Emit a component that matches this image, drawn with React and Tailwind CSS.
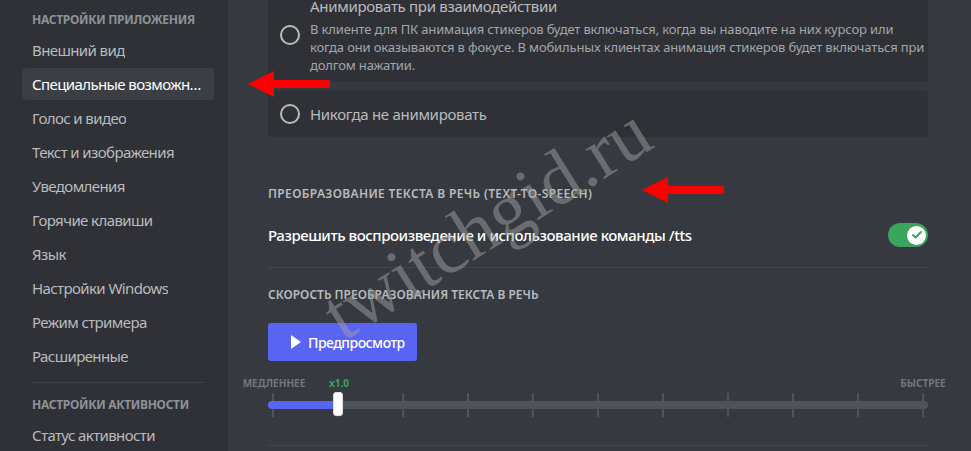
import { Check } from "lucide-react";

const appItems = [
  "Внешний вид",
  "Специальные возможности",
  "Голос и видео",
  "Текст и изображения",
  "Уведомления",
  "Горячие клавиши",
  "Язык",
  "Настройки Windows",
  "Режим стримера",
  "Расширенные",
];

const ticks = [0, 1, 2, 3, 4, 5, 6, 7, 8, 9, 10];

// стрелка-указатель (рисунок поверх скриншота)
const RedArrow = ({ className }) => (
  <svg className={className} width="82" height="26" viewBox="0 0 82 26">
    <polygon points="0,13 26,0 26,9 82,9 82,17 26,17 26,26" fill="#ff0000" />
  </svg>
);

const SidebarHeader = ({ children }) => (
  <div className="px-[10px] py-[6px] text-[12px] leading-[16px] font-bold uppercase text-[#8e9297] tracking-[-0.3px]">
    {children}
  </div>
);

const SidebarItem = ({ label, active }) => (
  <div
    className={`h-[32px] mb-[2px] px-[10px] flex items-center rounded-[4px] text-[15px] leading-[20px] tracking-[-0.6px] ${
      active ? "bg-[#3b3e45] text-white" : "text-[#b9bbbe]"
    }`}
  >
    <span className="truncate">{label}</span>
  </div>
);

const Radio = () => (
  <div className="w-[20px] h-[20px] shrink-0 rounded-full border-2 border-[#b9bbbe]" />
);

export default function App() {
  return (
    <div
      className="relative w-[971px] h-[451px] overflow-hidden flex bg-[#36393f]"
      style={{ fontFamily: '"Noto Sans", "Open Sans", sans-serif' }}
    >
      {/* боковое меню */}
      <aside className="w-[228px] shrink-0 bg-[#2f3136] pl-[22px] pt-[6px]">
        <div className="w-[192px]">
          <SidebarHeader>Настройки приложения</SidebarHeader>
          {appItems.map((item) => (
            <SidebarItem key={item} label={item} active={item === "Специальные возможности"} />
          ))}
          <div className="mx-[10px] mt-[10px] mb-[8px] h-px bg-[#3f4248]" />
          <SidebarHeader>Настройки активности</SidebarHeader>
          <SidebarItem label="Статус активности" />
        </div>
      </aside>

      {/* основной контент */}
      <main className="flex-1 pl-[40px]">
        <div className="w-[660px] mt-[-14px]">
          <div className="bg-[#2f3136] rounded-[4px] pl-[12px] pt-[10px] pb-[8px] flex items-center gap-[10px]">
            <Radio />
            <div className="w-[612px]">
              <div className="text-[15px] leading-[20px] tracking-[-0.3px] text-[#b9bbbe]">
                Анимировать при взаимодействии
              </div>
              <div className="mt-[4px] whitespace-nowrap text-[13px] leading-[18px] tracking-[-0.15px] text-[#a3a6aa]">
                В клиенте для ПК анимация стикеров будет включаться, когда вы наводите на них курсор или
                <br />
                когда они оказываются в фокусе. В мобильных клиентах анимация стикеров будет включаться при
                <br />
                долгом нажатии.
              </div>
            </div>
          </div>

          <div className="mt-[9px] h-[46px] bg-[#2f3136] rounded-[4px] pl-[12px] flex items-center gap-[10px]">
            <Radio />
            <div className="text-[15px] leading-[20px] tracking-[-0.3px] text-[#b9bbbe]">Никогда не анимировать</div>
          </div>

          <div className="mt-[49px] text-[12px] leading-[16px] font-semibold uppercase tracking-[0.35px] text-[#b9bbbe]">
            Преобразование текста в речь (text-to-speech)
          </div>

          <div className="mt-[21px] h-[24px] flex items-center justify-between">
            <div className="text-[15px] leading-[20px] font-medium tracking-[-0.45px] text-white">
              Разрешить воспроизведение и использование команды /tts
            </div>
            <div className="w-[40px] h-[24px] rounded-full bg-[#3ba55c] flex items-center justify-end pr-[2px]">
              <div className="w-[19px] h-[19px] rounded-full bg-white flex items-center justify-center">
                <Check size={12} strokeWidth={4} className="text-[#3ba55c]" />
              </div>
            </div>
          </div>

          <div className="mt-[20px] h-px bg-[#42454a]" />

          <div className="mt-[19px] text-[12px] leading-[16px] font-semibold uppercase text-[#b9bbbe]">
            Скорость преобразования текста в речь
          </div>

          <button className="mt-[20px] w-[149px] h-[38px] rounded-[3px] bg-[#5865f2] flex items-center pl-[23px] gap-[7px] text-white text-[14px] font-medium tracking-[-0.5px]">
            <svg width="10" height="14" viewBox="0 0 10 14">
              <polygon points="0,0 10,7 0,14" fill="#ffffff" />
            </svg>
            Предпросмотр
          </button>

          {/* ползунок скорости */}
          <div className="relative mt-[16px] h-[12px] text-[10px] leading-[12px] font-bold">
            <span className="absolute left-[6px] top-0 -translate-x-1/2 uppercase text-[#72767d]">Медленнее</span>
            <span className="absolute left-[71px] top-0 -translate-x-1/2 text-[#3ba55c]">x1.0</span>
            <span className="absolute left-[655px] top-0 -translate-x-1/2 uppercase text-[#72767d]">Быстрее</span>
          </div>
          <div className="relative mt-[4px] h-[24px]">
            <div className="flex justify-between px-[4px] h-full">
              {ticks.map((t) => (
                <div key={t} className="w-[2px] h-full bg-[#4f545c]" />
              ))}
            </div>
            <div className="absolute left-0 right-0 top-[8px] h-[8px] rounded-full bg-[#4f545c]" />
            <div className="absolute left-0 top-[8px] w-[70px] h-[8px] rounded-l-full bg-[#5865f2]" />
            <div className="absolute left-[65px] top-[-1px] w-[10px] h-[24px] rounded-[3px] bg-white border border-[#dcddde]" />
          </div>

          <div className="mt-[28px] h-px bg-[#42454a]" />
        </div>
      </main>

      {/* пометки поверх скриншота */}
      <RedArrow className="absolute left-[248px] top-[71px]" />
      <RedArrow className="absolute left-[642px] top-[177px]" />
      <div
        className="absolute left-[486px] top-[222px] -translate-x-1/2 -translate-y-1/2 -rotate-[32deg] pointer-events-none whitespace-nowrap text-[76px] leading-none text-[#a0a0a0]/50"
        style={{ fontFamily: '"Liberation Serif", serif' }}
      >
        twitchgid.ru
      </div>
    </div>
  );
}
